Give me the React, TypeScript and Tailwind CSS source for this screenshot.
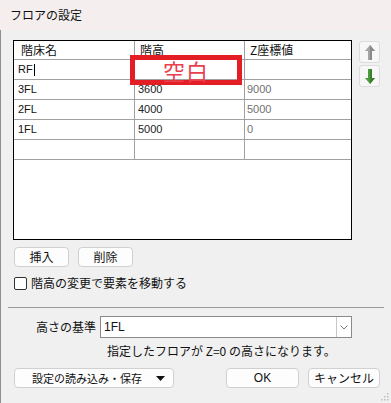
import React from "react";

const rows = [
  { name: "RF", height: "", z: "", editing: true },
  { name: "3FL", height: "3600", z: "9000" },
  { name: "2FL", height: "4000", z: "5000" },
  { name: "1FL", height: "5000", z: "0" },
  { name: "", height: "", z: "" },
];

const jp = { fontFamily: '"Noto Sans CJK JP", "Noto Sans", sans-serif' };
const num = { fontFamily: '"Liberation Sans", "Noto Sans CJK JP", sans-serif' };

function ArrowButton({ dir }: { dir: "up" | "down" }) {
  const fill = dir === "up" ? "#a3a3a3" : "#4c9b3c";
  const shade = dir === "up" ? "#8a8a8a" : "#3a7f2d";
  return (
    <div className="w-[21px] h-[22px] rounded-[3px] border border-[#dcdcdc] bg-[#f7f7f7] flex items-center justify-center">
      <svg width="10" height="15" viewBox="0 0 10 15">
        {dir === "up" ? (
          <>
            <path d="M5 0 L10 6 L7 6 L7 15 L3 15 L3 6 L0 6 Z" fill={fill} />
            <path d="M5 0 L10 6 L7 6 L7 15 L5 15 Z" fill={shade} />
          </>
        ) : (
          <>
            <path d="M5 15 L10 9 L7 9 L7 0 L3 0 L3 9 L0 9 Z" fill={fill} />
            <path d="M5 15 L10 9 L7 9 L7 0 L5 0 Z" fill={shade} />
          </>
        )}
      </svg>
    </div>
  );
}

function Btn({ children, className }: { children: React.ReactNode; className?: string }) {
  return (
    <div
      className={
        "h-[20px] rounded-[4px] border border-[#d0d0d0] bg-[#fdfdfd] flex items-center text-[#111] whitespace-nowrap " +
        (className ?? "")
      }
    >
      {children}
    </div>
  );
}

export default function App() {
  return (
    <div className="relative w-[391px] h-[403px] bg-[#f0f0f0] overflow-hidden text-[#111]" style={jp}>
      {/* TITLE BAR */}
      <div className="h-[30px] bg-[#f4efee] flex items-center pl-[10px] text-[12px]">フロアの設定</div>

      <div className="h-[373px] border-l border-[#8f8f8f] flex flex-col">
        {/* TABLE + ARROWS */}
        <div className="flex pt-[10px] pl-[12px] gap-[7px]">
          <div className="w-[339px] h-[200px] border border-black bg-white flex flex-col">
            <div className="flex h-[19px] border-b border-[#a0a0a0] text-[12px] leading-[18px]">
              <div className="w-[121px] border-r border-[#a0a0a0] pl-[7px]">階床名</div>
              <div className="w-[110px] border-r border-[#a0a0a0] pl-[5px]">階高</div>
              <div className="flex-1 pl-[5px]">Z座標値</div>
            </div>
            {rows.map((r, i) => (
              <div key={i} className="flex h-[20px] border-b border-[#a0a0a0] text-[11px] leading-[19px]" style={num}>
                <div className="w-[121px] border-r border-[#a0a0a0] pl-[4px] flex items-center">
                  {r.name}
                  {r.editing && <span className="ml-[1px] w-px h-[12px] bg-black" />}
                </div>
                <div className="w-[110px] border-r border-[#a0a0a0] pl-[3px] text-[#222]">{r.height}</div>
                <div className="flex-1 pl-[2px] text-[#707070]">{r.z}</div>
              </div>
            ))}
          </div>
          <div className="flex flex-col gap-[2px] pt-[1px]">
            <ArrowButton dir="up" />
            <ArrowButton dir="down" />
          </div>
        </div>

        {/* INSERT / DELETE */}
        <div className="flex gap-[9px] pl-[13px] mt-[7px]">
          <Btn className="w-[55px] justify-center text-[12px]">挿入</Btn>
          <Btn className="w-[55px] justify-center text-[12px]">削除</Btn>
        </div>

        {/* CHECKBOX */}
        <div className="flex items-center gap-[4px] pl-[13px] mt-[9px] h-[14px]">
          <div className="w-[13px] h-[13px] rounded-[2px] border border-[#333] bg-white" />
          <span className="text-[12px]">階高の変更で要素を移動する</span>
        </div>

        <div className="mx-[7px] mt-[17px] h-px bg-[#9a9a9a]" />

        {/* HEIGHT BASE */}
        <div className="flex items-center mt-[8px] pl-[35px]">
          <span className="w-[64px] text-[12px]">高さの基準</span>
          <div className="w-[252px] h-[22px] border border-[#8a8a8a] bg-white flex items-center">
            <span className="flex-1 pl-[3px] text-[12px]" style={num}>1FL</span>
            <div className="w-[15px] h-full border-l border-[#c8c8c8] flex items-center justify-center">
              <svg width="8" height="5" viewBox="0 0 8 5">
                <path d="M0.5 0.5 L4 4 L7.5 0.5" stroke="#777" fill="none" strokeWidth="1" />
              </svg>
            </div>
          </div>
        </div>
        <div className="pl-[106px] mt-[5px] text-[12px] leading-[16px]">指定したフロアが Z=0 の高さになります。</div>

        {/* BOTTOM BUTTONS */}
        <div className="flex items-center mt-[9px] pl-[13px]">
          <Btn className="w-[160px] justify-between pl-[17px] pr-[8px] text-[11px]">
            <span>設定の読み込み・保存</span>
            <svg width="9" height="5" viewBox="0 0 9 5">
              <path d="M0 0 L9 0 L4.5 5 Z" fill="#111" />
            </svg>
          </Btn>
          <Btn className="w-[73px] ml-[52px] justify-center text-[12px]">
            <span style={num}>OK</span>
          </Btn>
          <Btn className="w-[72px] ml-[9px] justify-center text-[12px]">キャンセル</Btn>
        </div>
      </div>

      {/* ANNOTATION */}
      <div className="absolute left-[130px] top-[55px] w-[112px] h-[30px] border-[5px] border-[#e31e24] flex items-center justify-center">
        <span className="text-[22px] leading-none text-[#e8404c] tracking-[1px]">空白</span>
      </div>

      {/* RESIZE GRIP */}
      <svg className="absolute right-[2px] bottom-[2px]" width="8" height="8" viewBox="0 0 8 8">
        <rect x="6" y="0" width="1.5" height="1.5" fill="#bdbdbd" />
        <rect x="3" y="3" width="1.5" height="1.5" fill="#bdbdbd" />
        <rect x="6" y="3" width="1.5" height="1.5" fill="#bdbdbd" />
        <rect x="0" y="6" width="1.5" height="1.5" fill="#bdbdbd" />
        <rect x="3" y="6" width="1.5" height="1.5" fill="#bdbdbd" />
        <rect x="6" y="6" width="1.5" height="1.5" fill="#bdbdbd" />
      </svg>
    </div>
  );
}
